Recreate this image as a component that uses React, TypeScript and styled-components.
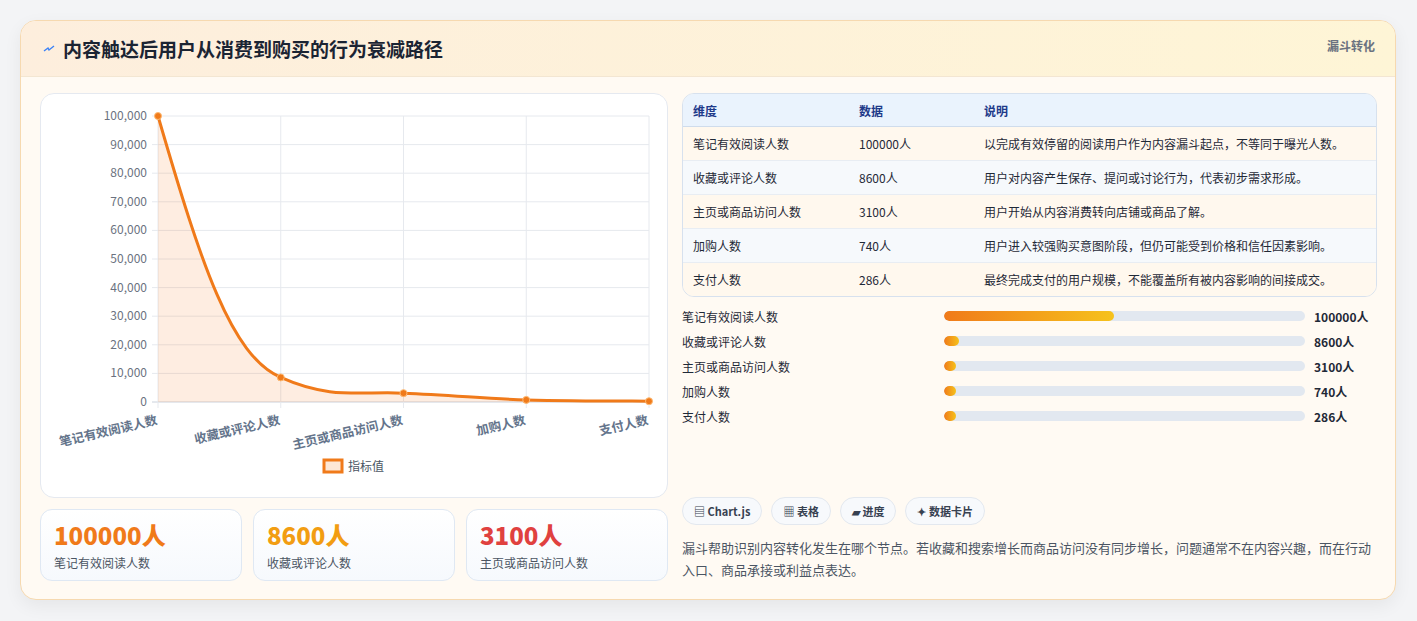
import React from 'react';
import styled, { createGlobalStyle } from 'styled-components';

const GlobalStyle = createGlobalStyle`
  body {
    margin: 0;
    background: #f3f4f6;
    font-family: "Noto Sans CJK SC", "Noto Sans", sans-serif;
  }
`;

const rows = [
  { name: '笔记有效阅读人数', value: 100000, desc: '以完成有效停留的阅读用户作为内容漏斗起点，不等同于曝光人数。' },
  { name: '收藏或评论人数', value: 8600, desc: '用户对内容产生保存、提问或讨论行为，代表初步需求形成。' },
  { name: '主页或商品访问人数', value: 3100, desc: '用户开始从内容消费转向店铺或商品了解。' },
  { name: '加购人数', value: 740, desc: '用户进入较强购买意图阶段，但仍可能受到价格和信任因素影响。' },
  { name: '支付人数', value: 286, desc: '最终完成支付的用户规模，不能覆盖所有被内容影响的间接成交。' },
];

const kpis = [
  { value: '100000人', label: '笔记有效阅读人数', color: '#f07a1a' },
  { value: '8600人', label: '收藏或评论人数', color: '#f29d12' },
  { value: '3100人', label: '主页或商品访问人数', color: '#e0413f' },
];

const Page = styled.div`
  padding: 20px 21px 22px 20px;
`;

const Card = styled.div`
  border: 1px solid #f6d9b0;
  border-radius: 16px;
  background: #fffaf3;
  box-shadow: 0 6px 18px rgba(0, 0, 0, 0.06);
  overflow: hidden;
`;

const Header = styled.div`
  height: 55px;
  display: flex;
  align-items: center;
  justify-content: space-between;
  padding: 0 20px 0 22px;
  background: linear-gradient(90deg, #fdeedd, #fef5d6);
  border-bottom: 1px solid #f3e6d2;
`;

const Title = styled.h1`
  margin: 0;
  font-size: 19px;
  font-weight: 700;
  color: #1b2433;
  display: flex;
  align-items: center;
  gap: 8px;
`;

const Tag = styled.span`
  font-size: 12px;
  font-weight: 700;
  color: #6b7280;
  align-self: flex-start;
  margin-top: 16px;
`;

const Body = styled.div`
  display: grid;
  grid-template-columns: 628px 695px;
  gap: 14px;
  padding: 16px 19px 18px 19px;
`;

const Column = styled.div`
  display: flex;
  flex-direction: column;
`;

const ChartCard = styled.div`
  height: 403px;
  background: #fff;
  border: 1px solid #e5e9f0;
  border-radius: 14px;
`;

const KpiRow = styled.div`
  display: grid;
  grid-template-columns: repeat(3, 1fr);
  gap: 11px;
  margin-top: 11px;
`;

const Kpi = styled.div`
  height: 72px;
  box-sizing: border-box;
  border: 1px solid #dfe8f3;
  border-radius: 12px;
  background: linear-gradient(180deg, #ffffff, #f6f9fd);
  padding: 10px 13px;
`;

const KpiValue = styled.div<{ $color: string }>`
  font-size: 24px;
  font-weight: 800;
  line-height: 30px;
  color: ${(p) => p.$color};
`;

const KpiLabel = styled.div`
  font-size: 12px;
  color: #4b5563;
  margin-top: 4px;
`;

const Table = styled.table`
  width: 100%;
  border-collapse: separate;
  border-spacing: 0;
  border: 1px solid #d7e1ee;
  border-radius: 12px;
  overflow: hidden;
  font-size: 12px;
  color: #1f2937;
`;

const Th = styled.th`
  text-align: left;
  font-weight: 700;
  color: #1e3a8a;
  background: #eaf3fd;
  height: 32px;
  padding: 0 10px;
  border-bottom: 1px solid #cfdcec;
`;

const Tr = styled.tr<{ $alt: boolean }>`
  background: ${(p) => (p.$alt ? '#f6f9fc' : '#fff8ee')};
`;

const Td = styled.td<{ $last: boolean }>`
  height: 33px;
  padding: 0 10px;
  border-bottom: ${(p) => (p.$last ? 'none' : '1px solid #e8edf3')};
`;

const Bars = styled.div`
  display: flex;
  flex-direction: column;
  gap: 7px;
  margin-top: 10px;
`;

const BarRow = styled.div`
  display: grid;
  grid-template-columns: 253px 361px 1fr;
  gap: 9px;
  align-items: center;
  height: 18px;
  font-size: 12px;
  color: #1f2937;
  white-space: nowrap;
`;

const Track = styled.div`
  height: 10px;
  border-radius: 5px;
  background: #e2e8f0;
  overflow: hidden;
`;

const Fill = styled.div`
  height: 100%;
  border-radius: 5px;
  background: linear-gradient(90deg, #f07a1a, #f6c21c);
`;

const BarValue = styled.span`
  font-weight: 700;
`;

const Chips = styled.div`
  display: flex;
  gap: 9px;
  margin-top: auto;
`;

const Chip = styled.span`
  height: 28px;
  box-sizing: border-box;
  padding: 0 11px;
  display: inline-flex;
  align-items: center;
  border: 1px solid #e3e8ef;
  border-radius: 14px;
  background: #f7f9fc;
  font-size: 11px;
  font-weight: 700;
  color: #374151;
`;

const Note = styled.p`
  margin: 12px 0 0;
  font-size: 13px;
  line-height: 22px;
  color: #4b5563;
`;

const yTicks = [100000, 90000, 80000, 70000, 60000, 50000, 40000, 30000, 20000, 10000, 0];
const X0 = 117, X1 = 608, Y0 = 22, Y1 = 308;
const xs = [0, 1, 2, 3, 4].map((i) => X0 + ((X1 - X0) / 4) * i);
const yOf = (v: number) => Y1 - (v / 100000) * (Y1 - Y0);
const pts = rows.map((r, i) => [xs[i], yOf(r.value)]);
const curve = `M${pts[0][0]},${pts[0][1]} C160,170 190,262 ${pts[1][0]},${pts[1][1]} C290,306 320,297 ${pts[2][0]},${pts[2][1]} C410,301 450,305 ${pts[3][0]},${pts[3][1]} C530,307 570,307 ${pts[4][0]},${pts[4][1]}`;

const Chart = () => (
  <svg width="627" height="400" viewBox="0 0 627 400" fontFamily="'Noto Sans CJK SC', sans-serif">
    {yTicks.map((t, i) => {
      const y = Y0 + ((Y1 - Y0) / 10) * i;
      return (
        <g key={t}>
          <line x1={X0 - 6} x2={X1} y1={y} y2={y} stroke={t === 0 ? '#cbd2dc' : '#e6e9ee'} />
          <text x={X0 - 11} y={y + 4} fontSize="12" fill="#6b7280" textAnchor="end">{t.toLocaleString('en-US')}</text>
        </g>
      );
    })}
    {xs.map((x) => (
      <line key={x} x1={x} x2={x} y1={Y0} y2={Y1 + 6} stroke="#e6e9ee" />
    ))}
    <path d={`${curve} L${X1},${Y1} L${X0},${Y1} Z`} fill="rgba(249,115,22,0.13)" />
    <path d={curve} fill="none" stroke="#f07a1a" strokeWidth="3" />
    {pts.map(([x, y]) => (
      <circle key={x} cx={x} cy={y} r="3.5" fill="#f07a1a" stroke="#fdba74" strokeWidth="1" />
    ))}
    {rows.map((r, i) => (
      <text key={r.name} transform={`translate(${xs[i]},${Y1 + 22}) rotate(-13)`} textAnchor="end" fontSize="12.5" fontWeight="700" fill="#64748b">
        {r.name}
      </text>
    ))}
    <rect x="283" y="366" width="18" height="12" fill="#fde7d6" stroke="#f07a1a" strokeWidth="3" />
    <text x="307" y="377" fontSize="12" fill="#4b5563">指标值</text>
  </svg>
);

const Bolt = () => (
  <svg width="12" height="12" viewBox="0 0 12 12">
    <path d="M1 8 L5 5 L6 7 L11 3" stroke="#3b82f6" strokeWidth="1.4" fill="none" />
  </svg>
);

export default function App() {
  const max = 100000;
  return (
    <Page>
      <GlobalStyle />
      <Card>
        <Header>
          <Title><Bolt />内容触达后用户从消费到购买的行为衰减路径</Title>
          <Tag>漏斗转化</Tag>
        </Header>
        <Body>
          <Column>
            <ChartCard><Chart /></ChartCard>
            <KpiRow>
              {kpis.map((k) => (
                <Kpi key={k.label}>
                  <KpiValue $color={k.color}>{k.value}</KpiValue>
                  <KpiLabel>{k.label}</KpiLabel>
                </Kpi>
              ))}
            </KpiRow>
          </Column>
          <Column>
            <Table>
              <thead>
                <tr>
                  <Th style={{ width: 146 }}>维度</Th>
                  <Th style={{ width: 105 }}>数据</Th>
                  <Th>说明</Th>
                </tr>
              </thead>
              <tbody>
                {rows.map((r, i) => (
                  <Tr key={r.name} $alt={i % 2 === 1}>
                    <Td $last={i === rows.length - 1}>{r.name}</Td>
                    <Td $last={i === rows.length - 1}>{r.value}人</Td>
                    <Td $last={i === rows.length - 1}>{r.desc}</Td>
                  </Tr>
                ))}
              </tbody>
            </Table>
            <Bars>
              {rows.map((r) => (
                <BarRow key={r.name}>
                  <span>{r.name}</span>
                  <Track>
                    <Fill style={{ width: Math.max(12, (r.value / max) * 170) }} />
                  </Track>
                  <BarValue>{r.value}人</BarValue>
                </BarRow>
              ))}
            </Bars>
            <Chips>
              <Chip>▤ Chart.js</Chip>
              <Chip>▦ 表格</Chip>
              <Chip>▰ 进度</Chip>
              <Chip>✦ 数据卡片</Chip>
            </Chips>
            <Note>漏斗帮助识别内容转化发生在哪个节点。若收藏和搜索增长而商品访问没有同步增长，问题通常不在内容兴趣，而在行动入口、商品承接或利益点表达。</Note>
          </Column>
        </Body>
      </Card>
    </Page>
  );
}
